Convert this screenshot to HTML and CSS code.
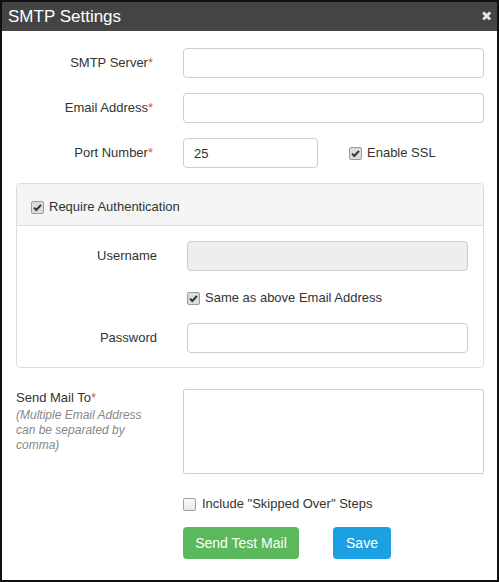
FILE: index.html
```html
<!DOCTYPE html>
<html>
<head>
<meta charset="utf-8">
<link rel="stylesheet" href="styles.css">
</head>
<body>
<div class="modal">
  <div class="modal-header">
    <span class="modal-title">SMTP Settings</span>
    <span class="close">&#x2715;</span>
  </div>
  <div class="modal-body">
    <div class="row">
      <label class="lbl">SMTP Server<span class="req">*</span></label>
      <input class="ctl" type="text">
    </div>
    <div class="row">
      <label class="lbl">Email Address<span class="req">*</span></label>
      <input class="ctl" type="text">
    </div>
    <div class="row">
      <label class="lbl">Port Number<span class="req">*</span></label>
      <div class="port-line">
        <input class="ctl port" type="text" value="25">
        <span class="check ssl"><span class="cb on"><svg viewBox="0 0 13 13" width="13" height="13"><path d="M3 6.6 L5.3 9 L10 3.8" fill="none" stroke="#333" stroke-width="2"/></svg></span>Enable SSL</span>
      </div>
    </div>

    <div class="panel">
      <div class="panel-heading">
        <span class="check"><span class="cb on"><svg viewBox="0 0 13 13" width="13" height="13"><path d="M3 6.6 L5.3 9 L10 3.8" fill="none" stroke="#333" stroke-width="2"/></svg></span>Require Authentication</span>
      </div>
      <div class="panel-body">
        <div class="prow">
          <label class="lbl">Username</label>
          <input class="ctl" type="text" disabled>
        </div>
        <div class="prow same">
          <span></span>
          <span class="check"><span class="cb on"><svg viewBox="0 0 13 13" width="13" height="13"><path d="M3 6.6 L5.3 9 L10 3.8" fill="none" stroke="#333" stroke-width="2"/></svg></span>Same as above Email Address</span>
        </div>
        <div class="prow">
          <label class="lbl">Password</label>
          <input class="ctl" type="password">
        </div>
      </div>
    </div>

    <div class="row mail">
      <div class="lbl-left">
        <div>Send Mail To<span class="req">*</span></div>
        <div class="help">(Multiple Email Address can be separated by comma)</div>
      </div>
      <textarea class="area"></textarea>
    </div>

    <div class="row include">
      <span></span>
      <span class="check"><span class="cb"></span>Include "Skipped Over" Steps</span>
    </div>

    <div class="row actions">
      <span></span>
      <div class="btns">
        <button class="btn btn-green">Send Test Mail</button>
        <button class="btn btn-blue">Save</button>
      </div>
    </div>
  </div>
</div>
</body>
</html>
```

FILE: styles.css
```css
* { box-sizing: border-box; }
html, body { margin: 0; padding: 0; background: #fff; }
body { font-family: "Liberation Sans", Arial, sans-serif; color: #333; }

.modal {
  width: 499px;
  height: 582px;
  border: 2px solid #111;
  background: #fff;
  overflow: hidden;
}

.modal-header {
  height: 29px;
  background: #444;
  display: flex;
  align-items: center;
  justify-content: space-between;
  padding: 0 6px 0 6px;
}
.modal-title { color: #fff; font-size: 17px; line-height: 20px; }
.close { color: #e8e8e8; font-size: 11px; font-weight: bold; line-height: 12px; margin-top: -2px; -webkit-text-stroke: 1.2px #e8e8e8; }

.modal-body { padding: 17px 13px 0 14px; }

.row {
  display: grid;
  grid-template-columns: 137px 1fr;
  column-gap: 30px;
  align-items: center;
  margin-bottom: 15px;
}

.lbl { text-align: right; font-size: 13px; line-height: 16px; color: #333; }
.req { color: #d9534f; }

.ctl {
  height: 30px;
  width: 100%;
  border: 1px solid #ccc;
  border-radius: 4px;
  padding: 0 10px;
  font-family: "Liberation Sans", Arial, sans-serif;
  font-size: 13px;
  color: #333;
  background: #fff;
  outline: none;
}
.ctl:disabled { background: #eee; }

.port-line { display: flex; align-items: center; }
.port { width: 135px; }
.ssl { margin-left: 31px; }

.check {
  display: inline-flex;
  align-items: center;
  font-size: 13px;
  line-height: 16px;
  color: #333;
}
.cb {
  width: 13px;
  height: 13px;
  border: 1px solid #a0a0a0;
  border-radius: 2px;
  background: linear-gradient(#fcfcfc, #e8e8e8);
  margin-right: 5px;
  display: inline-flex;
  align-items: center;
  justify-content: center;
  flex: none;
}
.cb svg { display: block; margin: -1px; }
.cb.on { background: #dcdcdc; border-color: #9a9a9a; }

.panel {
  border: 1px solid #ddd;
  border-radius: 4px;
  margin-bottom: 21px;
}
.panel-heading {
  height: 42px;
  background: #f5f5f5;
  border-bottom: 1px solid #ddd;
  border-radius: 3px 3px 0 0;
  display: flex;
  align-items: center;
  padding: 5px 14px 0;
}
.panel-body { padding: 15px 15px 14px 15px; }
.prow {
  display: grid;
  grid-template-columns: 125px 1fr;
  column-gap: 30px;
  align-items: center;
}
.prow.same { margin: 17px 0 15px; height: 20px; }

.row.mail { align-items: start; margin-bottom: 22px; }
.lbl-left { font-size: 13px; line-height: 16px; color: #333; padding-top: 1px; }
.help { font-size: 12px; line-height: 15px; font-style: italic; color: #888; margin-top: 2px; }
.area {
  height: 85px;
  width: 100%;
  border: 1px solid #ccc;
  border-radius: 2px;
  resize: none;
  outline: none;
  font-family: "Liberation Sans", Arial, sans-serif;
}

.row.include { margin-bottom: 15px; height: 16px; }
.row.include .cb { margin-right: 6px; }

.btns { display: flex; gap: 34px; }
.btn {
  height: 32px;
  border: none;
  border-radius: 4px;
  color: #fff;
  font-family: "Liberation Sans", Arial, sans-serif;
  font-size: 14px;
  padding: 0;
  cursor: pointer;
}
.btn-green { background: #5cb85c; width: 116px; }
.btn-blue { background: #1ba1e2; width: 58px; }
```
